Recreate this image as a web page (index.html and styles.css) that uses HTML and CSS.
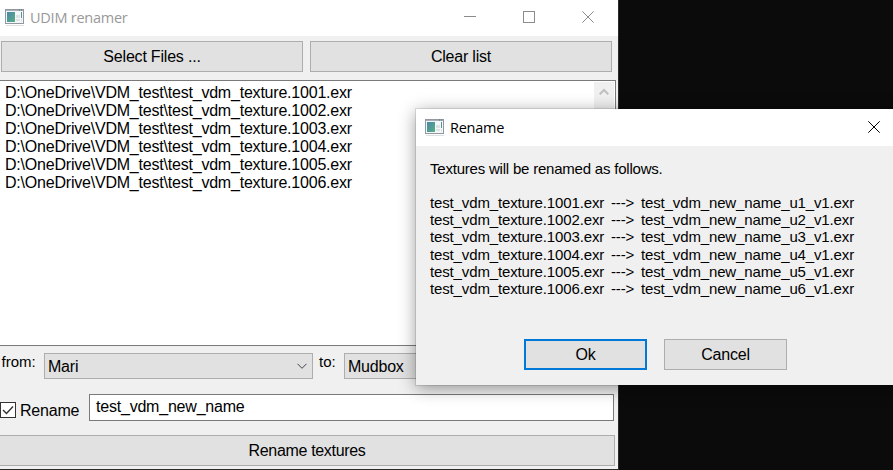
FILE: index.html
```html
<!DOCTYPE html>
<html lang="en">
<head>
<meta charset="utf-8">
<title>UDIM renamer</title>
<link rel="stylesheet" href="styles.css">
</head>
<body>
<svg class="defs" width="0" height="0">
  <defs>
    <linearGradient id="pane" x1="0" y1="0" x2="1" y2="1">
      <stop offset="0" stop-color="#4c86a8"/><stop offset="1" stop-color="#55b083"/>
    </linearGradient>
    <symbol id="app" viewBox="0 0 20 17">
      <path d="M1 16.5h18" stroke="#dde0e4"/>
      <rect x=".5" y=".5" width="18" height="14" fill="#f4f6f7" stroke="#9298a0"/>
      <path d="M1 1.5h17" stroke="#a7b0ba"/>
      <path d="M14 1h1M16 1h1" stroke="#5b6b80"/>
      <rect x="2" y="3" width="8" height="10" fill="url(#pane)"/>
      <path d="M11 6h4v3h-4zM11 10h4v2h-4z" fill="#dfe2e5"/>
      <path d="M16.5 3v6" stroke="#4f9a96"/>
      <path d="M16.5 10v3" stroke="#e1e4e6"/>
    </symbol>
  </defs>
</svg>
<main class="window">
  <header class="titlebar">
    <svg class="app-icon" width="20" height="17"><use href="#app"/></svg>
    <h1 class="title">UDIM renamer</h1>
    <div class="controls">
      <svg width="12" height="12"><path d="M0 5.5h12"/></svg>
      <svg width="12" height="12"><rect x=".5" y=".5" width="11" height="11"/></svg>
      <svg width="12" height="12"><path d="M.3 .3l11.4 11.4M11.7 .3L.3 11.7"/></svg>
    </div>
  </header>
  <div class="actions">
    <button class="button">Select Files ...</button>
    <button class="button">Clear list</button>
  </div>
  <div class="list">
    <ul class="files">
      <li>D:\OneDrive\VDM_test\test_vdm_texture.1001.exr</li>
      <li>D:\OneDrive\VDM_test\test_vdm_texture.1002.exr</li>
      <li>D:\OneDrive\VDM_test\test_vdm_texture.1003.exr</li>
      <li>D:\OneDrive\VDM_test\test_vdm_texture.1004.exr</li>
      <li>D:\OneDrive\VDM_test\test_vdm_texture.1005.exr</li>
      <li>D:\OneDrive\VDM_test\test_vdm_texture.1006.exr</li>
    </ul>
    <div class="scrollbar"><svg width="10" height="8"><path d="M.7 6.3L5 2l4.3 4.3"/></svg></div>
  </div>
  <div class="formats">
    <span class="label from">from:</span>
    <div class="combo"><span>Mari</span><svg width="10" height="7"><path d="M.5 .8L5 5.3 9.5 .8"/></svg></div>
    <span class="label to">to:</span>
    <div class="combo"><span>Mudbox</span><svg width="10" height="7"><path d="M.5 .8L5 5.3 9.5 .8"/></svg></div>
  </div>
  <div class="naming">
    <svg class="check" width="16" height="16"><rect x=".5" y=".5" width="15" height="15"/><path d="M3 8l3.5 3.5L13 4.5"/></svg>
    <span class="check-label">Rename</span>
    <div class="field">test_vdm_new_name</div>
  </div>
  <button class="button submit">Rename textures</button>
</main>
<section class="dialog">
  <header class="titlebar">
    <svg class="app-icon" width="20" height="17"><use href="#app"/></svg>
    <h2 class="title">Rename</h2>
    <svg class="close" width="12" height="12"><path d="M.3 .3l11.4 11.4M11.7 .3L.3 11.7"/></svg>
  </header>
  <p class="message">Textures will be renamed as follows.</p>
  <div class="renames">
    <span>test_vdm_texture.1001.exr</span><span>---&gt;</span><span>test_vdm_new_name_u1_v1.exr</span>
    <span>test_vdm_texture.1002.exr</span><span>---&gt;</span><span>test_vdm_new_name_u2_v1.exr</span>
    <span>test_vdm_texture.1003.exr</span><span>---&gt;</span><span>test_vdm_new_name_u3_v1.exr</span>
    <span>test_vdm_texture.1004.exr</span><span>---&gt;</span><span>test_vdm_new_name_u4_v1.exr</span>
    <span>test_vdm_texture.1005.exr</span><span>---&gt;</span><span>test_vdm_new_name_u5_v1.exr</span>
    <span>test_vdm_texture.1006.exr</span><span>---&gt;</span><span>test_vdm_new_name_u6_v1.exr</span>
  </div>
  <div class="dialog-actions">
    <button class="button primary">Ok</button>
    <button class="button">Cancel</button>
  </div>
</section>
</body>
</html>
```
FILE: styles.css
```css
* { box-sizing: border-box; }
body {
  margin: 0;
  width: 893px;
  height: 470px;
  overflow: hidden;
  position: relative;
  background: #0b0b0b;
  color: #000;
  font: 16px/18px "Liberation Sans", Arial, sans-serif;
  letter-spacing: -.21px;
}
svg { display: block; flex: none; fill: none; }
.defs { position: absolute; }
.window {
  width: 619px;
  height: 470px;
  display: flex;
  flex-direction: column;
  background: #f0f0f0;
  border-right: 1px solid #2b2b2b;
  border-bottom: 1px solid #2b2b2b;
}
.titlebar {
  display: flex;
  align-items: center;
  height: 36px;
  padding-left: 5px;
  background: #fff;
}
.titlebar .app-icon { margin-top: -1px; }
.title {
  margin: 0 0 0 5px;
  font: 14.5px/20px "Open Sans", "Noto Sans", sans-serif;
  letter-spacing: -.25px;
  color: #999;
}
.controls {
  display: flex;
  gap: 47px;
  margin: -2px 24px 0 auto;
  stroke: #8c8c8c;
}
.button {
  height: 31px;
  padding: 0;
  border: 1px solid #adadad;
  background: #e1e1e1;
  color: #000;
  font: inherit;
  letter-spacing: -.2px;
}
.actions {
  display: grid;
  grid-template-columns: 302px 302px;
  gap: 7px;
  margin: 5px 0 8px 1px;
}
.list {
  display: flex;
  justify-content: space-between;
  width: 617px;
  height: 266px;
  margin-left: -1px;
  padding: 1px;
  border: 1px solid #7a7a7a;
  background: #fff;
}
.files { list-style: none; margin: 2px 0 0 4px; padding: 0; }
.scrollbar {
  width: 20px;
  padding: 6px 5px;
  background: #f0f0f0;
  stroke: #bfbfbf;
  stroke-width: 2;
}
.formats { display: flex; margin-top: 7px; height: 26px; }
.label { font-size: 15px; letter-spacing: 0; }
.from { width: 44px; padding-left: 1.5px; }
.to { width: 31px; padding-left: 6px; }
.combo {
  display: flex;
  align-items: center;
  justify-content: space-between;
  width: 269px;
  padding: 1px 5px 0 3px;
  border: 1px solid #adadad;
  background: #e1e1e1;
  stroke: #444;
}
.naming { display: flex; align-items: flex-start; margin-top: 15px; height: 27px; }
.check { margin-top: 8px; fill: #fff; stroke: #333; }
.check path { fill: none; stroke-width: 1.4; }
.check-label { width: 73px; padding: 8px 0 0 4px; }
.field {
  width: 525px;
  height: 27px;
  padding: 3px 6px;
  border: 1px solid #7a7a7a;
  background: #fff;
}
.submit { width: 616px; margin: 14px 0 0 -1px; letter-spacing: -.33px; }
.dialog {
  position: absolute;
  left: 416px;
  top: 109px;
  width: 489px;
  height: 276px;
  background: #f0f0f0;
  box-shadow: 0 0 0 1px rgba(0, 0, 0, .1), 0 3px 16px rgba(0, 0, 0, .4);
}
.dialog .titlebar { height: 37px; padding-left: 9px; }
.dialog .app-icon { margin-top: 0; }
.dialog .title { color: #000; }
.close { margin: -1px 25px 0 auto; stroke: #000; }
.message { margin: 14px 0 17px 14px; font-size: 15px; line-height: 17px; }
.renames {
  display: grid;
  grid-template-columns: 181px 30px 230px;
  grid-auto-rows: 17.2px;
  margin-left: 14px;
  font-size: 15px;
  line-height: 17.2px;
  letter-spacing: -.14px;
}
.dialog-actions { display: flex; gap: 17px; margin: 42px 0 0 108px; }
.dialog-actions .button { width: 123px; }
.dialog-actions .primary { border: 2px solid #0078d7; }
```
